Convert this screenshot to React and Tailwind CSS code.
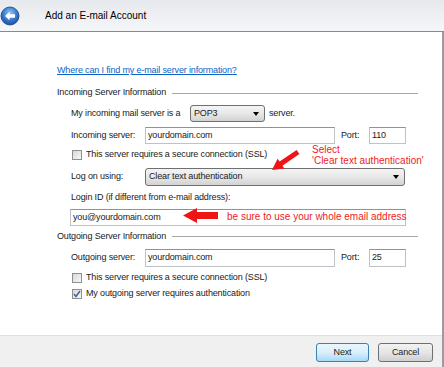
// App.jsx - "Add an E-mail Account" dialog (Vista style)

function BackButton() {
    return (
        <svg width="20" height="20" viewBox="0 0 20 20" className="ml-[0px] shrink-0">
            <defs>
                <radialGradient id="bb" cx="50%" cy="35%" r="65%">
                    <stop offset="0%" stopColor="#9cc6f4" />
                    <stop offset="55%" stopColor="#3a7fd6" />
                    <stop offset="100%" stopColor="#1c4f9e" />
                </radialGradient>
            </defs>
            <circle cx="10" cy="10" r="9" fill="url(#bb)" stroke="#1a3f7c" strokeWidth="0.8" />
            <path d="M5 10 L9.5 5.8 L9.5 8.3 L15 8.3 L15 11.7 L9.5 11.7 L9.5 14.2 Z" fill="#fff" />
        </svg>
    );
}

function Caret() {
    return <span className="w-0 h-0 border-l-[3.5px] border-r-[3.5px] border-t-[4px] border-l-transparent border-r-transparent border-t-black"></span>;
}

function Select({ value, width }) {
    return (
        <div className={`${width} h-full flex items-center justify-between pl-[3px] pr-[5px] border border-[#707070] rounded-[3px] bg-gradient-to-b from-[#f4f4f4] via-[#e8e8e8] to-[#d2d2d2]`}>
            <span>{value}</span>
            <Caret />
        </div>
    );
}

function Field({ value, width }) {
    return (
        <div className={`${width} h-full flex items-center pl-[2px] bg-white border border-[#bfc2c6] border-t-[#8f9296]`}>
            {value}
        </div>
    );
}

function Check({ checked }) {
    return (
        <span className="w-[10px] h-[10px] shrink-0 flex items-center justify-center border border-[#8e8f8f] bg-gradient-to-br from-[#d8d8d8] to-[#f7f7f7]">
            {checked && (
                <svg width="8" height="8" viewBox="0 0 8 8">
                    <path d="M1 4 L3 6.5 L7 1" fill="none" stroke="#4a5f97" strokeWidth="1.5" />
                </svg>
            )}
        </span>
    );
}

function GroupHeader({ title }) {
    return (
        <div className="flex items-center h-full mr-[24px]">
            <span>{title}</span>
            <div className="flex-1 h-px bg-[#a8a8a8] ml-[6px]"></div>
        </div>
    );
}

export default function App() {
    return (
        <div className="relative w-[444px] h-[367px] overflow-hidden bg-white flex flex-col font-['Liberation_Sans',Arial,sans-serif] text-[9px] tracking-[-0.15px] text-[#1a1a1a]">
            {/* Title bar */}
            <div className="h-[32px] shrink-0 flex items-center pl-[0px] border-b border-[#8a8a8a] bg-gradient-to-b from-[#e6e9ed] to-[#f5f6f8]">
                <BackButton />
                <span className="ml-[25px] text-[10px] tracking-normal text-black">Add an E-mail Account</span>
            </div>

            <div className="flex-1 flex flex-col border-r-2 border-[#9c9c9c]">
                {/* Form */}
                <div className="flex-1 flex flex-col pl-[57px]">
                    <div className="mt-[31px] h-[16px] flex items-center">
                        <span className="text-[#0b62c4] underline">Where can I find my e-mail server information?</span>
                    </div>

                    <div className="mt-[6px] h-[16px]">
                        <GroupHeader title="Incoming Server Information" />
                    </div>

                    <div className="mt-[4px] h-[17px] ml-[14px] flex items-center">
                        <span className="w-[119px]">My incoming mail server is a</span>
                        <Select value="POP3" width="w-[75px]" />
                        <span className="ml-[4px]">server.</span>
                    </div>

                    <div className="mt-[5px] h-[17px] ml-[14px] flex items-center">
                        <span className="w-[74px]">Incoming server:</span>
                        <Field value="yourdomain.com" width="w-[190px]" />
                        <span className="ml-[6px] w-[28px]">Port:</span>
                        <Field value="110" width="w-[37px]" />
                    </div>

                    <div className="mt-[3px] h-[15px] ml-[15px] flex items-center gap-[4px]">
                        <Check />
                        <span>This server requires a secure connection (SSL)</span>
                    </div>

                    <div className="mt-[6px] h-[18px] ml-[14px] flex items-center">
                        <span className="w-[74px]">Log on using:</span>
                        <Select value="Clear text authentication" width="w-[260px]" />
                    </div>

                    <div className="mt-[5px] h-[14px] ml-[14px] flex items-center">
                        <span>Login ID (if different from e-mail address):</span>
                    </div>

                    <div className="mt-[4px] h-[17px] ml-[13px] flex items-center">
                        <Field value="you@yourdomain.com" width="w-[336px]" />
                    </div>

                    <div className="mt-[3px] h-[15px]">
                        <GroupHeader title="Outgoing Server Information" />
                    </div>

                    <div className="mt-[5px] h-[18px] ml-[14px] flex items-center">
                        <span className="w-[74px]">Outgoing server:</span>
                        <Field value="yourdomain.com" width="w-[190px]" />
                        <span className="ml-[6px] w-[28px]">Port:</span>
                        <Field value="25" width="w-[37px]" />
                    </div>

                    <div className="mt-[4px] h-[14px] ml-[15px] flex items-center gap-[4px]">
                        <Check />
                        <span>This server requires a secure connection (SSL)</span>
                    </div>

                    <div className="mt-[2px] h-[14px] ml-[15px] flex items-center gap-[4px]">
                        <Check checked />
                        <span>My outgoing server requires authentication</span>
                    </div>
                </div>

                {/* Footer */}
                <div className="h-[32px] shrink-0 flex items-center justify-end gap-[9px] pr-[9px] pt-[2px] border-t border-[#dfdfdf] bg-[#f0f0f0]">
                    <button className="w-[53px] h-[19px] rounded-[3px] border border-[#3c7fb1] bg-gradient-to-b from-[#eaf6fd] via-[#d9f0fc] to-[#a7d9f5]">Next</button>
                    <button className="w-[55px] h-[19px] rounded-[3px] border border-[#707070] bg-gradient-to-b from-[#f2f2f2] via-[#e6e6e6] to-[#cfcfcf]">Cancel</button>
                </div>
            </div>

            {/* Red annotations drawn over the dialog */}
            <div className="absolute inset-0 pointer-events-none">
                <svg width="444" height="367" className="absolute left-0 top-0">
                    <polygon points="299.4,154.1 282.4,165.8 284.4,168.6 272,170 277.6,158.8 279.6,161.6 296.6,149.9" fill="#f01414" />
                    <polygon points="183,215.5 197,208 197,212 218,212 218,219 197,219 197,223" fill="#f01414" />
                </svg>
                <div className="absolute left-[312px] top-[144px] text-[10px] leading-[11px] tracking-normal text-[#ee1c24]">
                    <div>Select</div>
                    <div>'Clear text authentication'</div>
                </div>
                <div className="absolute left-[227px] top-[211px] text-[10px] leading-[12px] tracking-normal text-[#ee1c24]">
                    be sure to use your whole email address
                </div>
            </div>
        </div>
    );
}
